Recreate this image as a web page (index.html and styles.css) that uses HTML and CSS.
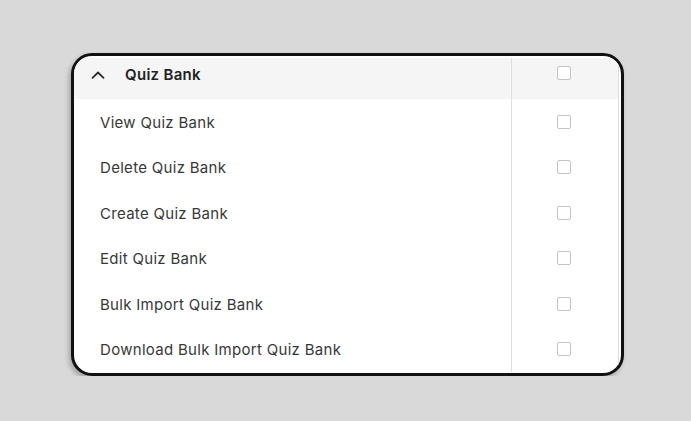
FILE: index.html
```html
<!DOCTYPE html>
<html>
<head>
<meta charset="utf-8">
<link rel="stylesheet" href="styles.css">
</head>
<body>
<div class="card">
  <div class="table">
    <div class="row head">
      <div class="label">
        <svg class="chev" width="14" height="8" viewBox="0 0 14 8"><path d="M1.5 6.8 L7 1.5 L12.5 6.8" fill="none" stroke="#2a2a2a" stroke-width="1.8" stroke-linecap="round" stroke-linejoin="round"/></svg>
        <span>Quiz Bank</span>
      </div>
      <div class="check"><span class="box"></span></div>
    </div>
    <div class="row"><div class="label">View Quiz Bank</div><div class="check"><span class="box"></span></div></div>
    <div class="row"><div class="label">Delete Quiz Bank</div><div class="check"><span class="box"></span></div></div>
    <div class="row"><div class="label">Create Quiz Bank</div><div class="check"><span class="box"></span></div></div>
    <div class="row"><div class="label">Edit Quiz Bank</div><div class="check"><span class="box"></span></div></div>
    <div class="row"><div class="label">Bulk Import Quiz Bank</div><div class="check"><span class="box"></span></div></div>
    <div class="row"><div class="label">Download Bulk Import Quiz Bank</div><div class="check"><span class="box"></span></div></div>
  </div>
</div>
</body>
</html>
```
FILE: styles.css
```css
html, body { margin: 0; padding: 0; }
body {
  background: #d9d9d9;
  padding: 53px 0 0 71px;
  font-family: Inter, "Noto Sans", sans-serif;
}
.card {
  width: 545px;
  height: 315px;
  border: 3px solid #111;
  border-radius: 21px;
  background: #fff;
  overflow: hidden;
  padding: 2px 2px 0 0;
  box-shadow: -2px 3px 5px rgba(0,0,0,0.25);
}
.table {
  border-right: 1px solid #dedede;
  height: 100%;
}
.row {
  display: flex;
  height: 45.5px;
}
.row.head {
  height: 41px;
  background: #f5f5f5;
}
.label {
  flex: 1;
  display: flex;
  align-items: center;
  padding-left: 26px;
  padding-top: 1px;
  font-size: 15px;
  letter-spacing: 0.3px;
  color: #383838;
  border-right: 1px solid #dedede;
}
.head .label {
  align-items: flex-start;
  padding-top: 8px;
  padding-left: 17px;
  color: #222;
  font-weight: 600;
}
.head .label span { line-height: 18px; }
.chev { margin: 5px 20px 0 0; }
.check {
  width: 104px;
  display: flex;
  align-items: center;
  justify-content: center;
  padding-right: 2px;
}
.head .check { align-items: flex-start; padding-top: 8px; }
.box {
  width: 12px;
  height: 12px;
  border: 1.6px solid #c4c4c4;
  border-radius: 2px;
  background: #fff;
}
```
